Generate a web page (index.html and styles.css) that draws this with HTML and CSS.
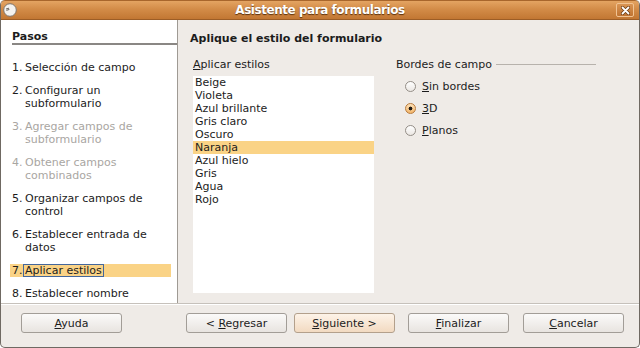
FILE: index.html
```html
<!DOCTYPE html>
<html lang="es">
<head>
    <meta charset="UTF-8">
    <title>Asistente para formularios</title>
    <link rel="stylesheet" href="styles.css">
</head>
<body>
<div class="window">
    <div class="titlebar">
        <span class="app-icon">
            <svg width="14" height="14" viewBox="0 0 14 14">
                <circle cx="7" cy="7" r="6.3" fill="#f4f2ef" stroke="#7d746b" stroke-width="1"/>
                <path d="M3 6 L6 5.2 M3.4 7.4 L6.4 6.4" stroke="#6a6560" stroke-width="1" fill="none"/>
            </svg>
        </span>
        <span class="title">Asistente para formularios</span>
        <span class="close">
            <svg width="9" height="9" viewBox="0 0 9 9">
                <path d="M1.5 1.5 L7.5 7.5 M7.5 1.5 L1.5 7.5" stroke="#6b3a12" stroke-width="3.2" stroke-linecap="round"/>
                <path d="M1.5 1.5 L7.5 7.5 M7.5 1.5 L1.5 7.5" stroke="#ffffff" stroke-width="1.8" stroke-linecap="round"/>
            </svg>
        </span>
    </div>
    <div class="main">
        <div class="steps">
            <div class="steps-head">Pasos</div>
            <ol class="step-list">
                <li><span class="num">1.</span><span class="text">Selección de campo</span></li>
                <li><span class="num">2.</span><span class="text">Configurar un subformulario</span></li>
                <li class="off"><span class="num">3.</span><span class="text">Agregar campos de subformulario</span></li>
                <li class="off"><span class="num">4.</span><span class="text">Obtener campos combinados</span></li>
                <li><span class="num">5.</span><span class="text">Organizar campos de control</span></li>
                <li><span class="num">6.</span><span class="text">Establecer entrada de datos</span></li>
                <li class="current"><span class="num">7.</span><span class="text">Aplicar estilos</span></li>
                <li><span class="num">8.</span><span class="text">Establecer nombre</span></li>
            </ol>
        </div>
        <div class="page">
            <h2>Aplique el estilo del formulario</h2>
            <div class="cols">
                <div class="styles-col">
                    <div class="label"><u>A</u>plicar estilos</div>
                    <ul class="listbox">
                        <li>Beige</li>
                        <li>Violeta</li>
                        <li>Azul brillante</li>
                        <li>Gris claro</li>
                        <li>Oscuro</li>
                        <li class="selected">Naranja</li>
                        <li>Azul hielo</li>
                        <li>Gris</li>
                        <li>Agua</li>
                        <li>Rojo</li>
                    </ul>
                </div>
                <div class="borders">
                    <div class="legend">Bordes de campo<span class="rule"></span></div>
                    <div class="radios">
                        <div class="radio"><span class="dot"></span><span><u>S</u>in bordes</span></div>
                        <div class="radio"><span class="dot on"></span><span><u>3</u>D</span></div>
                        <div class="radio"><span class="dot"></span><span><u>P</u>lanos</span></div>
                    </div>
                </div>
            </div>
        </div>
    </div>
    <div class="footer">
        <button class="btn"><u>A</u>yuda</button>
        <div class="group">
            <button class="btn back">&lt; <u>R</u>egresar</button>
            <button class="btn next"><u>S</u>iguiente &gt;</button>
            <button class="btn finish"><u>F</u>inalizar</button>
            <button class="btn"><u>C</u>ancelar</button>
        </div>
    </div>
</div>
</body>
</html>
```

FILE: styles.css
```css
* {
    box-sizing: border-box;
}

body {
    margin: 0;
    background: #ffffff;
    font-family: "DejaVu Sans", sans-serif;
    font-size: 11px;
    color: #1c1c1c;
}

.window {
    width: 640px;
    height: 348px;
    border: 1px solid #6f6962;
    border-top: none;
    border-radius: 5px;
    background: #efebe7;
    overflow: hidden;
    display: flex;
    flex-direction: column;
}

/* title bar */
.titlebar {
    height: 20px;
    margin: 0 -1px;
    display: grid;
    grid-template-columns: 1fr auto 1fr;
    align-items: center;
    background: linear-gradient(#e4a462, #d38c48 45%, #c27733 100%);
    border-top: 1px solid #a8662c;
    border-bottom: 1px solid #9c5d26;
    border-radius: 5px 5px 0 0;
}
.app-icon {
    justify-self: start;
    margin-left: 3px;
    display: flex;
}
.title {
    color: #ffffff;
    font-weight: bold;
    font-size: 12px;
    letter-spacing: -0.45px;
    text-shadow: 0 1px 1px #5a300c;
}
.close {
    justify-self: end;
    margin-right: 6px;
    width: 18px;
    height: 14px;
    border: 1px solid #f1c393;
    border-radius: 2px;
    background: linear-gradient(#d99453, #bf7331);
    display: flex;
    align-items: center;
    justify-content: center;
}

/* main area */
.main {
    height: 283px;
    display: flex;
}

.steps {
    width: 177px;
    background: #ffffff;
    border-right: 1px solid #9f9a94;
}
.steps-head {
    margin-left: 11px;
    padding-top: 11px;
    line-height: 12px;
    font-weight: bold;
    border-bottom: 2px solid #8a8784;
}
.step-list {
    list-style: none;
    margin: 16px 6px 0 9px;
    padding: 0;
}
.step-list li {
    display: flex;
    padding-left: 2px;
    margin-bottom: 10px;
    line-height: 13px;
}
.step-list .num {
    width: 13px;
    flex: none;
}
.step-list .off {
    color: #a9a6a2;
}
.step-list .current {
    background: #fad386;
}
.step-list .current .text {
    outline: 1px solid #44679c;
    outline-offset: -1px;
    padding: 0 2px;
    margin-left: -2px;
}

.page {
    flex: 1;
    padding: 12px 0 0 12px;
}
.page h2 {
    margin: 0;
    font-size: 11px;
    line-height: 13px;
    font-weight: bold;
}
.cols {
    display: flex;
    margin-top: 13px;
    padding-left: 3px;
}
.styles-col {
    width: 181px;
}
.label {
    line-height: 13px;
}
.listbox {
    list-style: none;
    margin: 5px 0 0 0;
    padding: 0;
    height: 217px;
    background: #ffffff;
}
.listbox li {
    padding-left: 2px;
    line-height: 13px;
}
.listbox .selected {
    background: #fad386;
}

.borders {
    margin-left: 22px;
    width: 200px;
}
.legend {
    display: flex;
    align-items: center;
    line-height: 13px;
}
.rule {
    flex: 1;
    height: 1px;
    margin-left: 4px;
    background: #b7b2ac;
}
.radios {
    margin-top: 9px;
    display: flex;
    flex-direction: column;
    gap: 9px;
}
.radio {
    display: flex;
    align-items: center;
    line-height: 13px;
}
.dot {
    width: 11px;
    height: 11px;
    margin: 0 6px 0 9px;
    border: 1px solid #948e87;
    border-radius: 50%;
    background: linear-gradient(#ffffff, #ebe7e3);
}
.dot.on {
    border-color: #b87a3c;
    background: radial-gradient(circle, #1e1a16 0 1.6px, transparent 2.2px), linear-gradient(#fde1b8, #f3b66a);
}

/* footer buttons */
.footer {
    flex: 1;
    display: flex;
    align-items: flex-start;
    padding: 9px 15px 0 20px;
    border-top: 1px solid #c6c1bb;
    box-shadow: inset 0 1px #ffffff;
}
.group {
    margin-left: auto;
    display: flex;
    gap: 14px;
}
.btn {
    width: 101px;
    height: 20px;
    padding: 0;
    border: 1px solid #a29d97;
    border-radius: 3px;
    background: linear-gradient(#fbfaf9, #e8e4e0);
    font-family: "DejaVu Sans", sans-serif;
    font-size: 11px;
    color: #1c1c1c;
}
.btn.back {
    margin-right: -7px;
}
.btn.next {
    margin-right: -1px;
    border-color: #b3a08c;
    background: linear-gradient(#fdf3e8, #f2dac1);
}
```
